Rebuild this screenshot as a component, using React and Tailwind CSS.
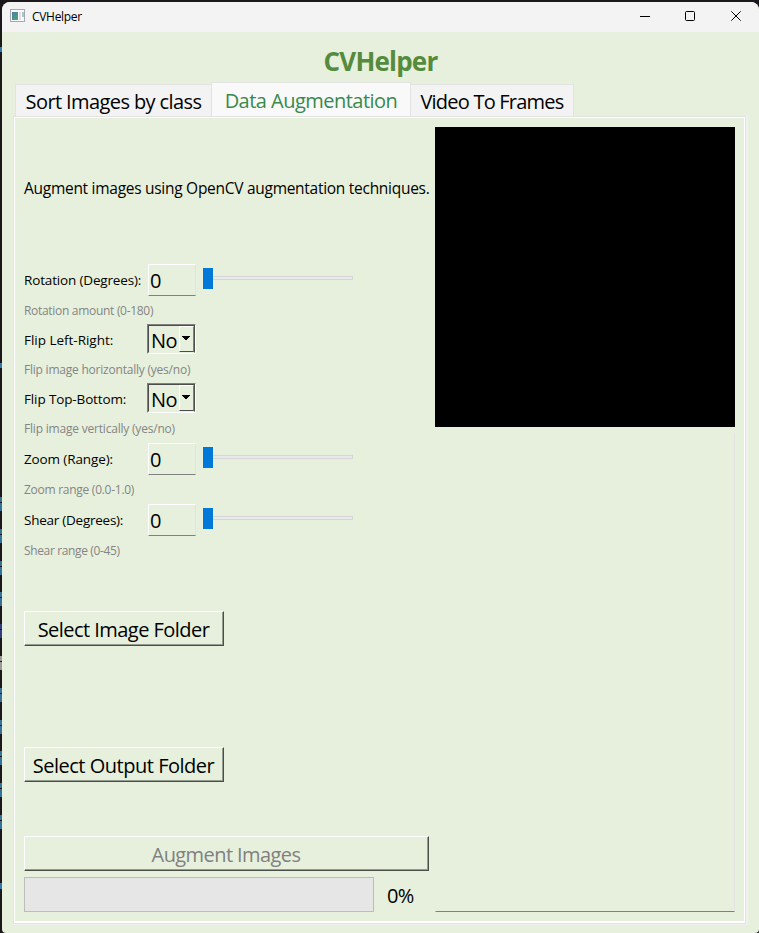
import React from "react";

function Entry({ className = "" }) {
  return (
    <div className={`h-8 w-12 border border-t-white border-l-white border-r-[#e3e3e3] border-b-[#808080] ${className}`}>
      <div className="pl-[1px] pt-[1px] text-[20px] leading-[30px] tracking-[-0.5px]">0</div>
    </div>
  );
}

function Slider({ className = "" }) {
  return (
    <div className={`flex h-[21px] w-[150px] ${className}`}>
      <div className="h-[21px] w-[10px] bg-[#0078d7]" />
      <div className="mt-2 h-1 flex-1 border border-l-0 border-[#d6d6d6] bg-[#e7eaea]" />
    </div>
  );
}

function Select() {
  return (
    <div className="ml-[-1px] mt-[1px] flex h-[30px] w-[49px] border border-t-[#808080] border-l-[#808080] border-r-white border-b-white">
      <div className="flex flex-1 border border-t-[#4d4d4d] border-l-[#4d4d4d] border-r-[#4d4d4d] border-b-[#e7f0dc]">
        <div className="w-[30px] pl-[2px] text-[20px] leading-[30px] tracking-[-0.5px]">No</div>
        <div className="flex h-[26px] flex-1 border border-t-white border-l-white border-r-[#808080] border-b-[#4d4d4d] pt-[9px] pl-[2px]">
          <svg width="8" height="4" viewBox="0 0 8 4" shapeRendering="crispEdges" className="shrink-0">
            <path d="M0 0h8v1H7v1H6v1H5v1H3V3H2V2H1V1H0z" />
          </svg>
        </div>
      </div>
    </div>
  );
}

function Button({ className = "", label }) {
  return (
    <div className={`h-[35px] border border-t-white border-l-white border-r-[#4a4f48] border-b-[#4a4f48] ${className}`}>
      <div className="h-full border-r border-b border-[#949b90] text-center text-[20px] leading-[36px] whitespace-nowrap">
        {label}
      </div>
    </div>
  );
}

const label = "w-[124px] text-[13.5px] leading-[34px] whitespace-nowrap";
const hint = "text-[12px] text-[#858585] whitespace-nowrap";

const codeMarks = [497, 529, 561, 592, 624, 656, 688, 720, 751, 783, 815];

export default function App() {
  return (
    <div className="flex h-[933px] w-[759px] overflow-hidden bg-[#1b181b] pt-[2px] font-['Open_Sans',sans-serif] text-black">
      <svg width="2" height="931" viewBox="0 2 2 931" className="shrink-0" shapeRendering="crispEdges">
        <path d="M0 47h2v5H0zM0 363h2v5H0zM0 883h2v6H0z" fill="#2f79ad" />
        {codeMarks.map((y) => (
          <path key={y} d={`M0 ${y}h2v5H0zM0 ${y + 6}h2v8H0z`} fill={y === 656 ? "#9a9a9a" : y === 624 ? "#343c80" : "#347299"} />
        ))}
      </svg>
      <div className="flex h-[931px] w-[757px] flex-col overflow-hidden rounded-t-[8px] rounded-b-[4px] bg-[#e7f0dc]">
        <header className="flex h-[30px] shrink-0 items-center bg-[#f3f3f3] pl-2">
          <svg width="16" height="14" viewBox="0 0 16 14" className="mb-[2px]">
            <defs>
              <linearGradient id="pane" x1="0" y1="0" x2="0.6" y2="1">
                <stop offset="0" stopColor="#4a7fa8" />
                <stop offset="1" stopColor="#4f9f7c" />
              </linearGradient>
            </defs>
            <rect x="0.5" y="0.5" width="14" height="12" fill="#fafafa" stroke="#a5aab2" />
            <rect x="2" y="3" width="6" height="8" fill="url(#pane)" />
            <rect x="9" y="3" width="2" height="8" fill="#dfe1e3" />
            <rect x="12" y="3" width="2" height="5" fill="#a8c8d0" />
          </svg>
          <span className="ml-[6px] text-[12px] tracking-[-0.3px]">CVHelper</span>
          <svg width="110" height="14" viewBox="0 0 110 14" fill="none" stroke="#000" className="mr-[12px] mb-[2px] ml-auto">
            <path d="M3 7.5h10" />
            <rect x="48.5" y="2.5" width="9" height="9" rx="1" />
            <path d="M94.3 2.3l9.4 9.4M103.7 2.3l-9.4 9.4" />
          </svg>
        </header>

        <h1 className="h-[50px] shrink-0 pt-[11px] text-center text-[26px] leading-[36px] font-bold tracking-[-0.8px] text-[#548b3c]">
          CVHelper
        </h1>

        <nav className="flex h-[34px] shrink-0 items-end pl-[13px] text-[20px] whitespace-nowrap">
          <div className="h-8 w-[196px] border border-r-0 border-b-0 border-[#e3e3e3] bg-[#f3f3f3] text-center leading-[34px] tracking-[-0.6px]">Sort Images by class</div>
          <div className="h-[34px] w-[200px] border border-b-0 border-[#e3e3e3] bg-[#f9f9f9] text-center leading-[36px] tracking-[-0.52px] text-[#38894c]">Data Augmentation</div>
          <div className="h-8 w-[163px] border border-b-0 border-l-0 border-[#e3e3e3] bg-[#f3f3f3] text-center leading-[34px] tracking-[-0.78px]">Video To Frames</div>
        </nav>

        <div className="ml-[11px] h-[809px] w-[735px] shrink-0 border-r-2 border-b border-[#f0f0f0]">
          <div className="h-full border border-[#e3e3e3]">
            <main className="flex h-full gap-[6px] border border-b-2 border-white pt-[9px] pl-[9px]">
              <section className="flex w-[405px] flex-col">
                <p className="mt-[50px] h-[86px] text-[15.5px] leading-[22px] tracking-[-0.28px] whitespace-nowrap">
                  Augment images using OpenCV augmentation techniques.
                </p>
                <div className="flex h-[37px]">
                  <div className={`${label} tracking-[-0.16px]`}>Rotation (Degrees):</div>
                  <Entry className="mt-[1px]" />
                  <Slider className="mt-[5px] ml-[7px]" />
                </div>
                <div className={`${hint} h-[23px] leading-[22px] tracking-[-0.3px]`}>Rotation amount (0-180)</div>
                <div className="flex h-[36px]">
                  <div className={`${label} tracking-[-0.02px]`}>Flip Left-Right:</div>
                  <Select />
                </div>
                <div className={`${hint} h-[23px] leading-[22px] tracking-[-0.22px]`}>Flip image horizontally (yes/no)</div>
                <div className="flex h-[36px]">
                  <div className={`${label} tracking-[-0.13px]`}>Flip Top-Bottom:</div>
                  <Select />
                </div>
                <div className={`${hint} h-[24px] leading-[22px] tracking-[-0.2px]`}>Flip image vertically (yes/no)</div>
                <div className="flex h-[37px]">
                  <div className={`${label} tracking-[-0.12px]`}>Zoom (Range):</div>
                  <Entry className="mt-[1px]" />
                  <Slider className="mt-[5px] ml-[7px]" />
                </div>
                <div className={`${hint} h-[24px] leading-[22px] tracking-[-0.27px]`}>Zoom range (0.0-1.0)</div>
                <div className="flex h-[37px]">
                  <div className={`${label} tracking-[-0.25px]`}>Shear (Degrees):</div>
                  <Entry className="mt-[1px]" />
                  <Slider className="mt-[5px] ml-[7px]" />
                </div>
                <div className={`${hint} h-[71px] leading-[22px] tracking-[-0.36px]`}>Shear range (0-45)</div>
                <Button label="Select Image Folder" className="w-[200px] tracking-[-0.54px]" />
                <Button label="Select Output Folder" className="mt-[101px] w-[200px] tracking-[-0.48px]" />
                <Button label="Augment Images" className="mt-[54px] w-[405px] tracking-[-0.58px] text-[#808080]" />
                <div className="mt-[6px] flex h-[35px]">
                  <div className="w-[350px] border border-[#bcbcbc] bg-[#e6e6e6]" />
                  <div className="ml-[13px] text-[20px] leading-[37px] tracking-[-0.6px]">0%</div>
                </div>
              </section>
              <section className="w-[300px]">
                <div className="h-[300px] bg-black" />
                <div className="mt-[6px] h-[479px] border border-t-[#e8ece4] border-l-[#e8ede6] border-r-[#e3e3e3] border-b-[#808080]" />
              </section>
            </main>
          </div>
        </div>
      </div>
    </div>
  );
}
